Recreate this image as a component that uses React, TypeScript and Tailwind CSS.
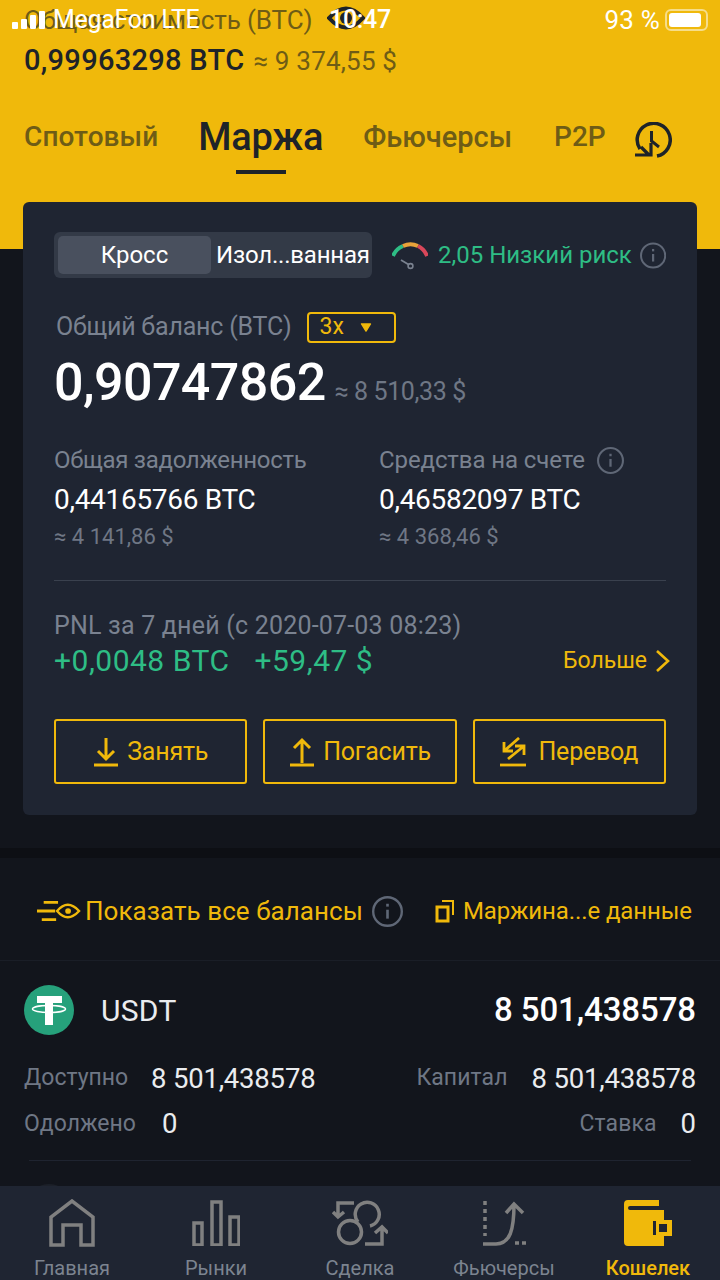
const Info = ({ className }: { className: string }) => (
  <svg viewBox="0 0 26 26" className={className} fill="none" stroke="currentColor">
    <circle cx="13" cy="13" r="12" strokeWidth="2" />
    <path d="M13 11.5v7.5" strokeWidth="2.2" />
    <path d="M13 6.5v2.4" strokeWidth="2.2" />
  </svg>
)

const Gauge = () => (
  <svg viewBox="0 0 36 30" className="w-[36px] h-[30px]" fill="none">
    <path d="M1 16 A 18 18 0 0 1 11 6" stroke="#2ebd85" strokeWidth="4" />
    <path d="M11 6 A 18 18 0 0 1 26 6" stroke="#e8a33a" strokeWidth="4" />
    <path d="M26 6 A 18 18 0 0 1 35 16" stroke="#d9475a" strokeWidth="4" />
    <path d="M9 20 L16.5 24.5" stroke="#7a8290" strokeWidth="1.8" />
    <circle cx="18.5" cy="26" r="2.4" stroke="#7a8290" strokeWidth="1.6" />
  </svg>
)

const HistoryIcon = () => (
  <svg viewBox="0 0 38 38" className="w-[38px] h-[38px]" fill="none" stroke="#1e2329" strokeWidth="3.5">
    <path d="M6 27 A 16.5 16.5 0 1 1 23 34" />
    <path d="M17.5 9 V19 L25 25" strokeWidth="3" />
    <path d="M7 25 L15 33 M1 33 H17 V21" strokeWidth="3.2" />
  </svg>
)

const ActionButton = ({ icon, label, gap }: { icon: React.ReactNode; label: string; gap: string }) => (
  <div className={`flex-1 h-[65px] border-2 border-[#f0b90b] rounded-[3px] flex items-center justify-center ${gap}`}>
    {icon}
    <span className="text-[25px] text-[#f0b90b] tracking-[-0.2px]">{label}</span>
  </div>
)

const NavItem = ({ icon, label, active }: { icon: React.ReactNode; label: string; active?: boolean }) => (
  <div className="flex-1 flex flex-col items-center">
    <div className="h-[52px] flex items-center">{icon}</div>
    <span className={`mt-[8px] text-[20px] leading-[22px] ${active ? 'text-[#f0b90b] font-medium' : 'text-[#7c8490]'}`}>{label}</span>
  </div>
)

export default function App() {
  return (
    <div className="relative w-[720px] h-[1280px] overflow-hidden bg-[#12151c] font-['Roboto',sans-serif]">
      {/* iOS status bar sits over the page */}
      <svg viewBox="0 0 38 26" className="absolute left-[327px] top-[5px] w-[38px] h-[26px] z-10" fill="none">
        <path d="M2 13 Q19 -6 36 13 Q19 32 2 13Z" stroke="#1e2329" strokeWidth="4" />
        <circle cx="19" cy="13" r="6" fill="#1e2329" />
      </svg>
      <div className="absolute top-[4px] left-0 right-0 h-[32px] flex items-center text-white text-[25px] z-10">
        <div className="ml-[12px] flex items-end gap-[3px] h-[18px]">
          <div className="w-[6px] h-[7px] bg-white rounded-[1px]" />
          <div className="w-[6px] h-[10px] bg-white rounded-[1px]" />
          <div className="w-[6px] h-[14px] bg-white rounded-[1px]" />
          <div className="w-[6px] h-[18px] bg-white rounded-[1px]" />
        </div>
        <span className="ml-[8px] w-[276px] tracking-[-0.3px]">MegaFon LTE</span>
        <span className="font-medium tracking-[-0.3px]">10:47</span>
        <span className="ml-auto text-[26px] tracking-[0.2px]">93 %</span>
        <div className="ml-[5px] mr-[12px] w-[43px] h-[22px] border-2 border-[#f6dd8a] rounded-[6px] p-[2px]">
          <div className="w-[32px] h-full bg-white rounded-[3px]" />
        </div>
      </div>

      {/* yellow header */}
      <div className="h-[249px] bg-[#f0b90b] px-[24px]">
        <div className="pt-[5px] text-[26px] leading-[30px] text-[#6e5c16] tracking-[-0.1px]">Общая стоимость (BTC)</div>
        <div className="mt-[7px] flex items-baseline leading-[36px]">
          <span className="text-[29px] font-medium text-[#1e2329] tracking-[0.3px]">0,99963298 BTC</span>
          <span className="ml-[9px] text-[26px] text-[#6e5c16] tracking-[0.2px]">≈ 9 374,55 $</span>
        </div>
        <div className="mt-[36px] flex items-start">
          <span className="mt-[5px] text-[28px] leading-[34px] font-medium text-[#6e5c16] tracking-[0.1px]">Спотовый</span>
          <div className="ml-[40px] flex flex-col items-center">
            <span className="text-[38px] leading-[44px] font-medium text-[#1e2329] tracking-[-0.3px]">Маржа</span>
            <div className="mt-[11px] w-[50px] h-[4px] bg-[#1e2329]" />
          </div>
          <span className="ml-[40px] mt-[5px] text-[29px] leading-[34px] font-medium text-[#6e5c16]">Фьючерсы</span>
          <span className="ml-[42px] mt-[5px] text-[28px] leading-[34px] font-medium text-[#6e5c16]">P2P</span>
          <div className="ml-[28px] mt-[7px]"><HistoryIcon /></div>
        </div>
      </div>

      {/* margin card */}
      <div className="relative mx-[23px] -mt-[47px] h-[613px] bg-[#1f2532] rounded-[6px] px-[31px] pt-[30px]">
        <div className="flex items-center">
          <div className="w-[318px] h-[46px] bg-[#333a47] rounded-[6px] p-[4px] flex items-center text-white text-[24px]">
            <div className="shrink-0 w-[153px] h-[38px] bg-[#49505e] rounded-[5px] flex items-center justify-center">Кросс</div>
            <span className="ml-[5px] tracking-[-0.2px] whitespace-nowrap">Изол...ванная</span>
          </div>
          <div className="ml-[20px]"><Gauge /></div>
          <span className="ml-[10px] text-[24px] text-[#2ebd85] whitespace-nowrap">2,05 Низкий риск</span>
          <Info className="ml-[8px] w-[27px] h-[27px] text-[#5f6776]" />
        </div>

        <div className="mt-[31px] flex items-center h-[36px]">
          <span className="ml-[2px] text-[25px] text-[#7a8290] tracking-[-0.2px]">Общий баланс (BTC)</span>
          <div className="ml-[15px] w-[89px] h-[31px] border-2 border-[#f0b90b] rounded-[4px] flex items-center text-[#f0b90b] text-[23px] pl-[11px]">
            3x
            <svg viewBox="0 0 12 10" className="ml-[16px] w-[12px] h-[9px]"><path d="M1 1H11L6 9Z" fill="#f0b90b" stroke="#f0b90b" strokeWidth="1.5" strokeLinejoin="round" /></svg>
          </div>
        </div>

        <div className="mt-[7px] flex items-baseline">
          <span className="text-[52px] leading-[62px] font-medium text-white tracking-[-0.6px]">0,90747862</span>
          <span className="ml-[9px] text-[25px] text-[#6f7785] tracking-[-0.4px]">≈ 8 510,33 $</span>
        </div>

        <div className="mt-[32px] grid grid-cols-[325px_1fr]">
          <div>
            <div className="text-[24px] leading-[28px] text-[#7a8290] tracking-[-0.3px]">Общая задолженность</div>
            <div className="mt-[10px] text-[28px] leading-[32px] text-white tracking-[-0.3px]">0,44165766 BTC</div>
            <div className="mt-[8px] text-[22px] leading-[26px] text-[#6f7785]">≈ 4 141,86 $</div>
          </div>
          <div>
            <div className="flex items-center text-[24px] leading-[28px] text-[#7a8290] tracking-[-0.1px]">
              Средства на счете
              <Info className="ml-[12px] w-[27px] h-[27px] text-[#5f6776]" />
            </div>
            <div className="mt-[10px] text-[28px] leading-[32px] text-white tracking-[-0.3px]">0,46582097 BTC</div>
            <div className="mt-[8px] text-[22px] leading-[26px] text-[#6f7785]">≈ 4 368,46 $</div>
          </div>
        </div>

        <div className="mt-[30px] h-px bg-[#3a414e]" />

        <div className="mt-[31px] text-[25px] leading-[28px] text-[#7a8290] tracking-[0.2px]">PNL за 7 дней (с 2020-07-03 08:23)</div>
        <div className="mt-[3px] flex items-center">
          <span className="text-[30px] leading-[36px] text-[#2ebd85] tracking-[0.5px]">+0,0048 BTC</span>
          <span className="ml-[25px] text-[30px] leading-[36px] text-[#2ebd85] tracking-[0.5px]">+59,47 $</span>
          <span className="ml-auto text-[23px] text-[#f0b90b]">Больше</span>
          <svg viewBox="0 0 15 24" className="ml-[8px] -mr-[4px] w-[15px] h-[24px]" fill="none" stroke="#f0b90b" strokeWidth="2.6">
            <path d="M2 2 L13 12 L2 22" />
          </svg>
        </div>

        <div className="mt-[40px] flex gap-[16px]">
          <ActionButton
            gap="gap-[8px]"
            label="Занять"
            icon={
              <svg viewBox="0 0 26 30" className="w-[26px] h-[30px]" fill="none" stroke="#f0b90b" strokeWidth="3">
                <path d="M13 1V21 M5 14 L13 22 L21 14" /><path d="M1 28H25" />
              </svg>
            }
          />
          <ActionButton
            gap="gap-[8px]"
            label="Погасить"
            icon={
              <svg viewBox="0 0 26 30" className="w-[26px] h-[30px]" fill="none" stroke="#f0b90b" strokeWidth="3">
                <path d="M13 4V26 M5 11 L13 3 L21 11" /><path d="M1 28H25" />
              </svg>
            }
          />
          <ActionButton
            gap="gap-[12px]"
            label="Перевод"
            icon={
              <svg viewBox="0 0 26 30" className="w-[26px] h-[30px]" fill="none" stroke="#f0b90b" strokeWidth="2.8">
                <path d="M19 1 L4 14 M4 5 V14 H13" /><path d="M8 22 L24 9 M15 9 H24 V18" /><path d="M0 28H26" />
              </svg>
            }
          />
        </div>
      </div>

      <div className="mt-[33px] h-[10px] bg-[#0d0f14]" />

      {/* balances */}
      <div className="h-[103px] pt-[4px] flex items-center border-b border-[#1a1e27] text-[#f0b90b] text-[26px]">
        <svg viewBox="0 0 46 24" className="ml-[37px] w-[44px] h-[24px]" fill="none" stroke="#f0b90b" strokeWidth="3">
          <path d="M7 3H22 M0 12H19 M5 21H20" />
          <path d="M21 12 Q32 -1 44 12 Q32 25 21 12Z" strokeWidth="2.5" />
          <circle cx="32.5" cy="12" r="3" fill="#f0b90b" stroke="none" />
        </svg>
        <span className="ml-[4px] tracking-[0.05px] whitespace-nowrap">Показать все балансы</span>
        <Info className="ml-[9px] w-[31px] h-[31px] text-[#5f6776]" />
        <svg viewBox="0 0 20 24" className="ml-[32px] w-[20px] h-[24px]" fill="none" stroke="#f0b90b" strokeWidth="3">
          <path d="M2 8H13V22H2Z" /><path d="M7 2H18V16" strokeWidth="2" />
        </svg>
        <span className="ml-[8px] text-[24px] tracking-[-0.1px] whitespace-nowrap">Маржина...е данные</span>
      </div>

      <div className="px-[24px]">
        <div className="mt-[24px] flex items-center justify-between">
          <div className="flex items-center">
            <svg viewBox="0 0 50 50" className="w-[50px] h-[50px]">
              <circle cx="25" cy="25" r="25" fill="#26a17b" />
              <path d="M13 11H38V18H29V40H21V18H13Z" fill="#fff" />
              <ellipse cx="25" cy="24" rx="16.5" ry="3.5" fill="none" stroke="#fff" strokeWidth="1.5" />
            </svg>
            <span className="ml-[27px] text-[30px] text-[#eaecef] tracking-[0.3px]">USDT</span>
          </div>
          <span className="text-[33px] font-medium text-white tracking-[-0.1px]">8 501,438578</span>
        </div>

        <div className="mt-[23px] flex items-center justify-between">
          <div className="flex items-center">
            <span className="w-[127px] text-[23px] text-[#6f7785]">Доступно</span>
            <span className="text-[27.5px] text-[#eaecef] tracking-[-0.2px]">8 501,438578</span>
          </div>
          <div className="flex items-center">
            <span className="mr-[24px] text-[23px] text-[#6f7785] tracking-[0.1px]">Капитал</span>
            <span className="text-[27.5px] text-[#eaecef] tracking-[-0.2px]">8 501,438578</span>
          </div>
        </div>

        <div className="mt-[4px] flex items-center justify-between">
          <div className="flex items-center">
            <span className="w-[138px] text-[23px] text-[#6f7785]">Одолжено</span>
            <span className="text-[27.5px] text-[#eaecef]">0</span>
          </div>
          <div className="flex items-center">
            <span className="mr-[24px] text-[23px] text-[#6f7785] tracking-[0.1px]">Ставка</span>
            <span className="text-[27.5px] text-[#eaecef]">0</span>
          </div>
        </div>

        <div className="mt-[15px] mx-[5px] h-px bg-[#1f2430]" />

        {/* top of the next coin, mostly hidden by the tab bar */}
        <div className="mt-[23px] w-[50px] h-[50px] rounded-full bg-[#1c2029]" />
      </div>

      {/* bottom tab bar */}
      <div className="absolute left-0 right-0 bottom-0 h-[94px] bg-[#1f2532] flex pt-[11px]">
        <NavItem
          label="Главная"
          icon={
            <svg viewBox="0 0 46 48" className="w-[46px] h-[48px]" fill="none" stroke="#808080" strokeWidth="3.5">
              <path d="M2 46V18L23 2L44 18V46H32V26H14V46Z" />
            </svg>
          }
        />
        <NavItem
          label="Рынки"
          icon={
            <svg viewBox="0 0 48 46" className="w-[48px] h-[46px]" fill="none" stroke="#808080" strokeWidth="3.5">
              <path d="M2 23H10V45H2Z M20 2H29V45H20Z M38 17H47V45H38Z" />
            </svg>
          }
        />
        <NavItem
          label="Сделка"
          icon={
            <svg viewBox="0 0 56 46" className="w-[56px] h-[46px]" fill="none" stroke="#808080" strokeWidth="3.5">
              <path d="M26 22 A 12 12 0 1 1 38 26" />
              <circle cx="18" cy="32" r="11.5" />
              <path d="M22 3H6V17 M1 12 L6 17 L12 12" />
              <path d="M33 44H50V27 M43 33 L50 27 L56 33" />
            </svg>
          }
        />
        <NavItem
          label="Фьючерсы"
          icon={
            <svg viewBox="0 0 44 46" className="w-[44px] h-[46px]" fill="none" stroke="#808080" strokeWidth="3.5">
              <path d="M3 1V36" strokeDasharray="4 4" />
              <path d="M1 44H14C28 44 32 30 32 4 M24 13 L32 4 L41 13" />
              <path d="M33 43H37 M40 43H44" />
            </svg>
          }
        />
        <NavItem
          active
          label="Кошелек"
          icon={
            <svg viewBox="0 0 48 46" className="w-[48px] h-[46px]">
              <path d="M4 0H35V6H6Q4 6 4 8Q4 10 6 10H40V20H48V36H40V46H4Q0 46 0 42V4Q0 0 4 0Z" fill="#f0b90b" />
              <path d="M29 21H32V35H29Z M35 24H43V32H35Z" fill="#1f2532" />
            </svg>
          }
        />
      </div>
    </div>
  )
}
